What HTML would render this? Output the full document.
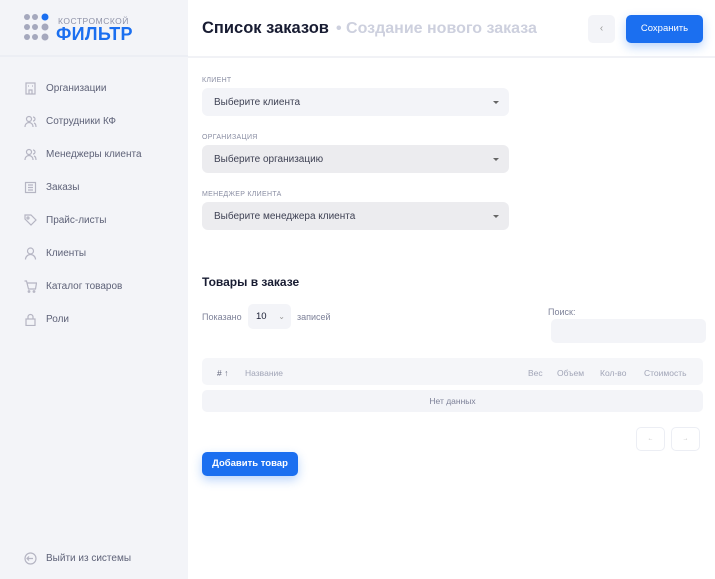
<!DOCTYPE html>
<html><head><meta charset="utf-8"><style>
*{box-sizing:border-box;margin:0;padding:0}
body{width:715px;height:579px;overflow:hidden;font-family:"Liberation Sans",sans-serif;background:#fff;position:relative;color:#3f4254}
.sb{position:absolute;left:0;top:0;width:188px;height:579px;background:#f3f4f8}
.sbh{height:57px;border-bottom:2px solid #eceef4}
.nav{position:absolute;left:24px;font-size:10px;color:#5e6278;display:flex;align-items:center}
.nav svg{width:13px;height:13px;margin-right:9px;stroke:#b5b5c3;fill:none;stroke-width:1.2}
.hdr{position:absolute;left:188px;top:0;right:0;height:58px;border-bottom:2px solid #f1f2f6}
.t1{position:absolute;left:14px;top:19px;font-size:16.5px;font-weight:bold;color:#181c32}
.t2{position:absolute;left:148px;top:20px;font-size:16px;font-weight:bold;color:#cdd0de}
.back{position:absolute;left:588px;top:15px;width:27px;height:28px;border-radius:5px;background:#f3f4f8;color:#999;font-size:10px;text-align:center;line-height:28px}
.save{position:absolute;left:626px;top:15px;width:77px;height:28px;border-radius:5px;background:#1b6ff0;color:#fff;font-size:9.5px;text-align:center;line-height:28px;box-shadow:0 4px 10px rgba(27,111,240,.3)}
.lbl{position:absolute;left:202px;font-size:7px;color:#8a8ea3;letter-spacing:.3px}
.sel{position:absolute;left:202px;width:307px;height:28px;border-radius:6px;font-size:10px;color:#3f4254;padding-left:12px;line-height:29px}
.sel:after{content:"";position:absolute;right:10px;top:13px;border:3px solid transparent;border-top:3px solid #666}
.tx{position:absolute;font-size:9px;color:#7e8299}
.th{position:absolute;font-size:8.5px;color:#a1a5b7;top:368px}
</style></head><body>
<div class="sb"><div class="sbh"></div></div>
<svg style="position:absolute;left:23px;top:13px" width="30" height="30">
<g fill="#a5a8bd"><circle cx="4" cy="4" r="3"/><circle cx="12" cy="4" r="3"/><circle cx="4" cy="14" r="3"/><circle cx="12" cy="14" r="3"/><circle cx="22" cy="14" r="3.5"/><circle cx="4" cy="24" r="3"/><circle cx="12" cy="24" r="3"/><circle cx="22" cy="24" r="3.5"/></g><circle cx="22" cy="4" r="3.5" fill="#1b6ff0"/></svg>
<div style="position:absolute;left:58px;top:16px;font-size:8.5px;color:#8f93a8;letter-spacing:.5px">КОСТРОМСКОЙ</div>
<div style="position:absolute;left:56px;top:24px;font-size:18px;font-weight:900;color:#1b6ff0;letter-spacing:.3px">ФИЛЬТР</div>
<div class="nav" style="top:82px"><svg viewBox="0 0 13 13"><rect x="2" y="1" width="9" height="11"/><path d="M5 12V8h3v4M4 4h1M8 4h1"/></svg>Организации</div>
<div class="nav" style="top:115px"><svg viewBox="0 0 13 13"><circle cx="5" cy="4" r="2.5"/><path d="M1 12c0-3 2-4.5 4-4.5s4 1.5 4 4.5M9 2a2 2 0 010 4M10 8c1.5.5 2 2 2 4"/></svg>Сотрудники КФ</div>
<div class="nav" style="top:148px"><svg viewBox="0 0 13 13"><circle cx="5" cy="4" r="2.5"/><path d="M1 12c0-3 2-4.5 4-4.5s4 1.5 4 4.5M9 2a2 2 0 010 4M10 8c1.5.5 2 2 2 4"/></svg>Менеджеры клиента</div>
<div class="nav" style="top:181px"><svg viewBox="0 0 13 13"><rect x="1.5" y="1.5" width="10" height="10"/><path d="M4 4h5M4 6.5h5M4 9h5"/></svg>Заказы</div>
<div class="nav" style="top:214px"><svg viewBox="0 0 13 13"><path d="M1 1h6l5 5-5 5-6-6z"/><circle cx="4" cy="4" r="1"/></svg>Прайс-листы</div>
<div class="nav" style="top:247px"><svg viewBox="0 0 13 13"><circle cx="6.5" cy="4" r="3"/><path d="M1.5 12.5c0-3 2.5-5 5-5s5 2 5 5"/></svg>Клиенты</div>
<div class="nav" style="top:280px"><svg viewBox="0 0 13 13"><path d="M0.5 1h2l2 8h7l1-6H3.5"/><circle cx="5" cy="11.5" r=".8"/><circle cx="10" cy="11.5" r=".8"/></svg>Каталог товаров</div>
<div class="nav" style="top:313px"><svg viewBox="0 0 13 13"><rect x="2" y="6" width="9" height="6.5"/><path d="M4 6V4a2.5 2.5 0 015 0v2"/></svg>Роли</div>
<div class="nav" style="top:552px"><svg viewBox="0 0 13 13"><circle cx="6.5" cy="6.5" r="5.5"/><path d="M3 6.5h6M5 4.5l-2 2 2 2"/></svg>Выйти из системы</div>
<div class="hdr"><div class="t1">Список заказов</div><div class="t2">• Создание нового заказа</div></div>
<div class="back">&lsaquo;</div><div class="save">Сохранить</div>
<div class="lbl" style="top:77px">КЛИЕНТ</div>
<div class="sel" style="top:88px;background:#f3f4f8">Выберите клиента</div>
<div class="lbl" style="top:134px">ОРГАНИЗАЦИЯ</div>
<div class="sel" style="top:145px;background:#ececef">Выберите организацию</div>
<div class="lbl" style="top:191px">МЕНЕДЖЕР КЛИЕНТА</div>
<div class="sel" style="top:202px;background:#ececef">Выберите менеджера клиента</div>
<div style="position:absolute;left:202px;top:275px;font-size:12px;font-weight:bold;color:#181c32">Товары в заказе</div>
<div class="tx" style="left:202px;top:312px">Показано</div>
<div style="position:absolute;left:248px;top:304px;width:43px;height:25px;background:#f3f4f8;border-radius:5px;font-size:9.5px;color:#181c32;padding:7px 0 0 8px">10 <span style="color:#999;margin-left:9px;font-size:8px">&#8964;</span></div>
<div class="tx" style="left:297px;top:312px">записей</div>
<div class="tx" style="left:548px;top:307px">Поиск:</div>
<div style="position:absolute;left:551px;top:319px;width:155px;height:24px;background:#f3f4f8;border-radius:5px"></div>
<div style="position:absolute;left:202px;top:358px;width:501px;height:27px;background:#f5f6f9;border-radius:5px"></div>
<div class="th" style="left:217px;color:#5e6278">#&nbsp;↑</div>
<div class="th" style="left:245px">Название</div>
<div class="th" style="left:528px">Вес</div>
<div class="th" style="left:557px">Объем</div>
<div class="th" style="left:600px">Кол-во</div>
<div class="th" style="left:644px">Стоимость</div>
<div style="position:absolute;left:202px;top:390px;width:501px;height:22px;background:#f3f4f8;border-radius:5px;font-size:8.5px;color:#7e8299;text-align:center;line-height:23px">Нет данных</div>
<div style="position:absolute;left:636px;top:427px;width:29px;height:24px;border:1px solid #eceef4;border-radius:5px;font-size:6px;color:#bbb;text-align:center;line-height:22px">←</div>
<div style="position:absolute;left:671px;top:427px;width:29px;height:24px;border:1px solid #eceef4;border-radius:5px;font-size:6px;color:#bbb;text-align:center;line-height:22px">→</div>
<div style="position:absolute;left:202px;top:452px;width:96px;height:24px;background:#1b6ff0;border-radius:5px;color:#fff;font-size:9.5px;font-weight:bold;text-align:center;line-height:24px;box-shadow:0 4px 10px rgba(27,111,240,.3)">Добавить товар</div>
</body></html>
